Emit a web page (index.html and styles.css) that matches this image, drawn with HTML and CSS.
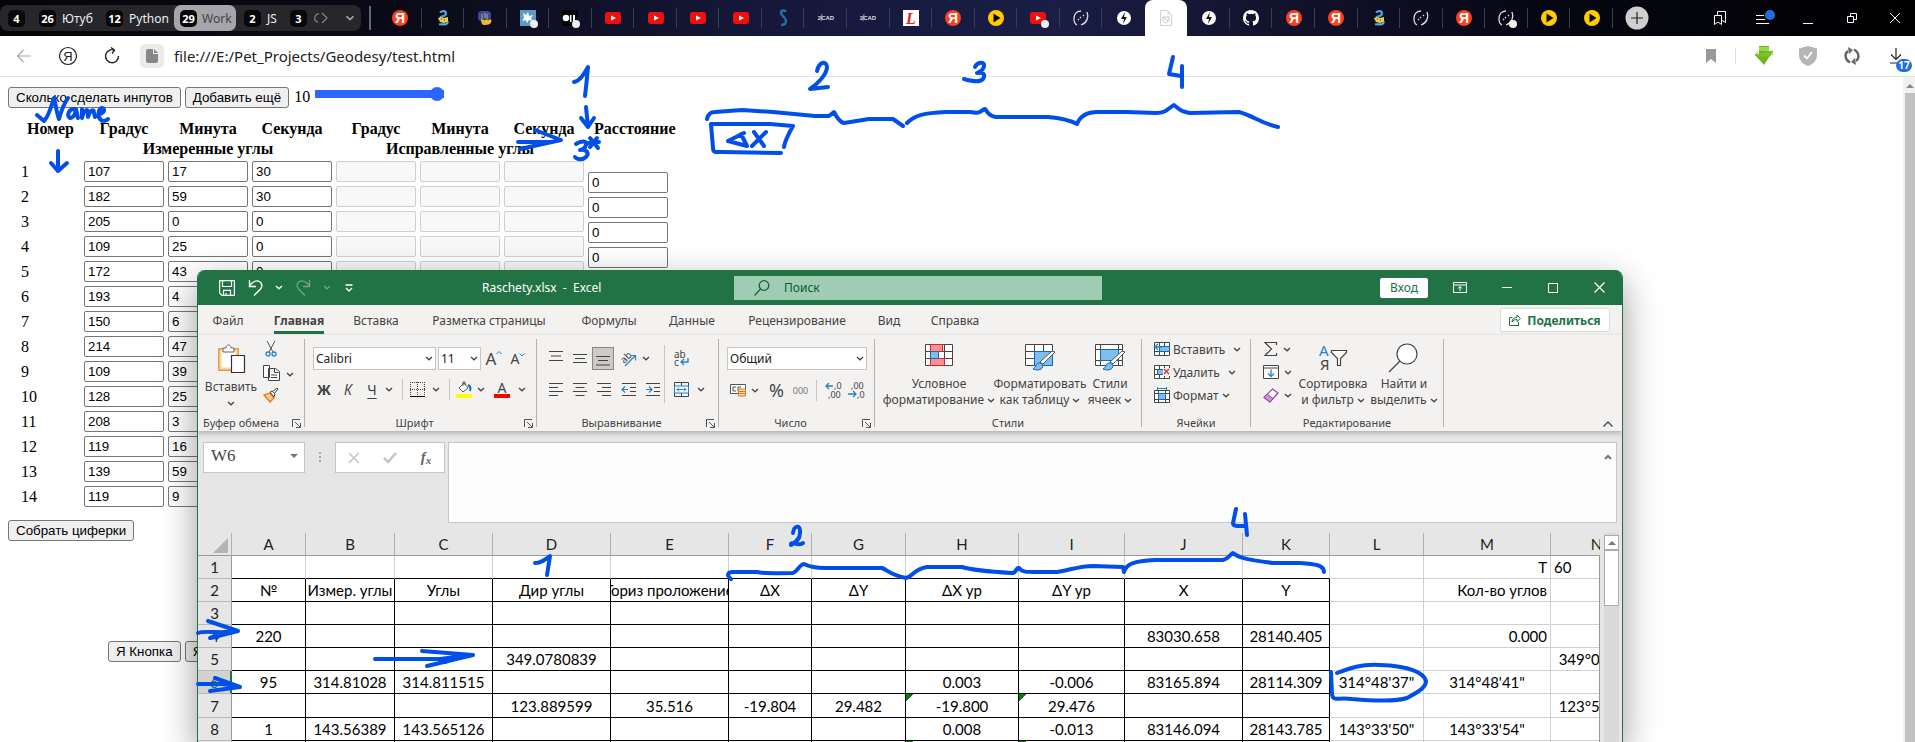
FILE: index.html
```html
<!DOCTYPE html>
<html lang="ru">
<head>
<meta charset="utf-8">
<title>test.html</title>
<link rel="stylesheet" href="styles.css">
</head>
<body>
<svg class="sprite" aria-hidden="true">
  <symbol id="ya" viewBox="0 0 20 20"><circle cx="10" cy="10" r="8" fill="#fc3f1d"/><text x="10" y="15" text-anchor="middle" class="ya-letter">Я</text></symbol>
  <symbol id="snake" viewBox="0 0 20 20"><path d="M7 4.500c2-2 6-2 6 1s-3 2-6 4" fill="none" stroke="#4ba3d8" stroke-width="2.200"/><path d="M6 16.500c3-1 6 1 8-1s-1-3-3-2" fill="none" stroke="#5bb0df" stroke-width="2.200"/><path d="M5 10l3-1 3 1 4-1v4l-4 2-4-1z" fill="#f2cf4a"/><path d="M8 11h1M11 12h1" stroke="#222" stroke-width="1"/></symbol>
  <symbol id="python" viewBox="0 0 20 20"><path d="M3 10V6c0-2 2-3 4-3h5c2 0 4 1 4 3v3c0 1-1 2-2 2H8c-2 0-2 1-2 2-2 0-3-1-3-3z" fill="#3d4a9a"/><path d="M6 11c1 1 10 1 10 0 1 3 0 6-6 6-3 0-4-2-4-6z" fill="#f0b92d"/><path d="M7 6v5M10 5v5M12 6v6M9 12v3" stroke="#b9a988" stroke-width="1"/></symbol>
  <symbol id="react" viewBox="0 0 20 20"><path d="M2 2h16v16H2z" fill="#5b9dc4"/><path d="M5 5l3 2 2-3 1 4 4-1-2 3 2 3-4-1-2 3-1-3-4 1 2-3z" fill="#fff"/><circle cx="16" cy="16" r="4" fill="#eee"/></symbol>
  <symbol id="blob" viewBox="0 0 20 20"><path d="M2 2h16v16H2z" fill="#000"/><circle cx="6" cy="10" r="3.300" fill="#fff"/><path d="M10 7h1.500v7H10zM13 7h2v8h-2z" fill="#fff"/><circle cx="16" cy="16" r="4" fill="#eee"/></symbol>
  <symbol id="yt" viewBox="0 0 20 20"><rect x="2" y="4" width="16" height="12" rx="3" fill="#f00f0f"/><path d="M8 7.500l5 2.500-5 2.500z" fill="#fff"/></symbol>
  <symbol id="ess" viewBox="0 0 20 20"><path d="M13 4c-1-2-5-2-5 1s5 4 5 8-3 4-5 4" fill="none" stroke="#1c6f9c" stroke-width="2.600"/></symbol>
  <symbol id="cad" viewBox="0 0 20 20"><path d="M6 6L5 13" stroke="#bbb" stroke-width=".8"/><text x="10" y="12" text-anchor="middle" class="cad-letter">2CAD</text></symbol>
  <symbol id="ell" viewBox="0 0 20 20"><path d="M2 2h16v16H2z" fill="#fff"/><text x="10" y="16" text-anchor="middle" class="ell-letter">L</text></symbol>
  <symbol id="play" viewBox="0 0 20 20"><circle cx="10" cy="10" r="8" fill="#fc0"/><path d="M7.500 5.500l7 4.500-7 4.500z" fill="#000"/></symbol>
  <symbol id="dial" viewBox="0 0 20 20"><path d="M10 3C5 3 3 7 3 11c0 3 1 5 3 6M16 4c2 5 0 11-6 13" fill="none" stroke="#ddd" stroke-width="1.300"/><path d="M9 9l1 1M12 7l1 1M7 12l1-1" stroke="#ddd" stroke-width="1.300"/></symbol>
  <symbol id="bolt" viewBox="0 0 20 20"><circle cx="10" cy="10" r="7" fill="#fff"/><path d="M11 4L7 11h3l-1 5 4-7h-3z" fill="#111"/></symbol>
  <symbol id="doc" viewBox="0 0 20 20"><path d="M4.500 2.500h7l4 4v11h-11z" fill="#fff" stroke="#d0d0d0"/><path d="M11.500 2.500v4h4z" fill="#ddd"/><path d="M7 9h6c1 3-1 5-3 6-2-1-4-3-3-6zM8 10l4 3" fill="none" stroke="#c4c4c4"/></symbol>
  <symbol id="hub" viewBox="0 0 16 16"><path fill="#fff" d="M8 0C3.580 0 0 3.580 0 8c0 3.540 2.290 6.530 5.470 7.590.4.070.55-.17.55-.38v-1.490c-2.010.37-2.530-.49-2.690-.94-.09-.23-.48-.94-.82-1.130-.28-.15-.68-.52-.01-.53.63-.01 1.080.58 1.230.82.72 1.210 1.870.87 2.330.66.070-.52.28-.87.51-1.070-1.780-.2-3.640-.89-3.640-3.950 0-.87.31-1.590.82-2.150-.08-.2-.36-1.020.08-2.120 0 0 .67-.21 2.200.82a7.600 7.600 0 0 1 4 0c1.530-1.040 2.200-.82 2.200-.82.44 1.100.16 1.920.08 2.120.51.56.82 1.270.82 2.150 0 3.070-1.870 3.750-3.650 3.950.29.25.54.73.54 1.480v2.200c0 .21.15.46.55.38A8 8 0 0 0 16 8c0-4.420-3.580-8-8-8z"/></symbol>
  <symbol id="chev" viewBox="0 0 8 5"><path d="M1 1l3 2.800L7 1" fill="none" stroke="currentColor" stroke-width="1.300"/></symbol>
  <symbol id="launch" viewBox="0 0 9 9"><path d="M.5 8V.5H8M3 3l5 5M8.500 4v4.500H4" fill="none" stroke="#555"/></symbol>
</svg>

<header class="browser">
  <nav class="tabstrip" aria-label="Вкладки">
    <div class="groups">
      <button class="grp g1"><b>4</b></button><button class="grp g2"><b>26</b>Ютуб</button><button class="grp g3"><b>12</b>Python</button><button class="grp g4 on"><b>29</b>Work</button><button class="grp g5"><b>2</b>JS</button><button class="grp g6"><b>3</b><svg width="16" height="12" viewBox="0 0 16 12" fill="none" stroke="#888" stroke-width="1.200"><path d="M6 2C1 1 0 10 5 10M9 1l5 5-5 5"/></svg></button><button class="grp g7" aria-label="Ещё"><svg width="10" height="6"><use href="#chev"/></svg></button>
    </div>
    <div class="tabs">
      <button class="tab"><svg><use href="#ya"/></svg></button><button class="tab"><svg><use href="#snake"/></svg></button><button class="tab"><svg><use href="#python"/></svg></button><button class="tab"><svg><use href="#react"/></svg></button><button class="tab"><svg><use href="#blob"/></svg></button><button class="tab"><svg><use href="#yt"/></svg></button><button class="tab"><svg><use href="#yt"/></svg></button><button class="tab"><svg><use href="#yt"/></svg></button><button class="tab"><svg><use href="#yt"/></svg></button><button class="tab"><svg><use href="#ess"/></svg></button><button class="tab"><svg><use href="#cad"/></svg></button><button class="tab"><svg><use href="#cad"/></svg></button><button class="tab"><svg><use href="#ell"/></svg></button><button class="tab"><svg><use href="#ya"/></svg></button><button class="tab"><svg><use href="#play"/></svg></button><button class="tab dot"><svg><use href="#yt"/></svg></button><button class="tab"><svg><use href="#dial"/></svg></button><button class="tab last"><svg><use href="#bolt"/></svg></button><button class="tab current"><svg><use href="#doc"/></svg></button><button class="tab"><svg><use href="#bolt"/></svg></button><button class="tab"><svg class="hub"><use href="#hub"/></svg></button><button class="tab"><svg><use href="#ya"/></svg></button><button class="tab"><svg><use href="#ya"/></svg></button><button class="tab"><svg><use href="#snake"/></svg></button><button class="tab"><svg><use href="#dial"/></svg></button><button class="tab"><svg><use href="#ya"/></svg></button><button class="tab dot"><svg><use href="#dial"/></svg></button><button class="tab"><svg><use href="#play"/></svg></button><button class="tab"><svg><use href="#play"/></svg></button>
    </div>
    <div class="winctl">
      <button class="plus" aria-label="Новая вкладка"><svg width="24" height="24" viewBox="0 0 24 24"><circle cx="12" cy="12" r="11.500" fill="#cfcfd2"/><path d="M12 6v12M6 12h12" stroke="#222" stroke-width="1.200"/></svg></button>
      <button class="marks" aria-label="Закладки"><svg width="16" height="16" viewBox="0 0 16 16" fill="none" stroke="#fff"><path d="M2.500 5.500h7v9L6 12l-3.500 2.500zM5.500 5V1.500h8v11L10 10.500"/></svg></button>
      <button aria-label="Меню"><svg width="20" height="20" viewBox="0 0 20 20"><path d="M2 7.500h8M2 11.500h9M2 15.500h13" stroke="#fff"/><circle cx="16" cy="7" r="5" fill="#1f6fe0"/></svg></button>
      <button aria-label="Свернуть"><svg width="10" height="12"><path d="M0 11.500h10" stroke="#fff"/></svg></button>
      <button aria-label="Восстановить"><svg width="12" height="12" viewBox="0 0 12 12" fill="none" stroke="#fff"><path d="M1.500 4.500h6v6h-6zM4.500 4.500v-3h6v6h-3"/></svg></button>
      <button aria-label="Закрыть"><svg width="12" height="12" viewBox="0 0 12 12" stroke="#fff"><path d="M1 1l10 10M11 1L1 11"/></svg></button>
    </div>
  </nav>
  <div class="address">
    <button class="a1" aria-label="Назад"><svg width="16" height="14" viewBox="0 0 16 14" fill="none" stroke="#aaa" stroke-width="1.200"><path d="M15 7H1.500M7.500 1L1.500 7l6 6"/></svg></button>
    <button class="a2" aria-label="Яндекс"><svg width="20" height="20" viewBox="0 0 20 20"><circle cx="10" cy="10" r="8.500" fill="none" stroke="#222" stroke-width="1.200"/><text x="10" y="15" text-anchor="middle" class="ya-out">Я</text></svg></button>
    <button class="a3" aria-label="Обновить"><svg width="18" height="18" viewBox="0 0 18 18" fill="none" stroke="#222" stroke-width="1.400"><path d="M15.500 9A6.500 6.500 0 1 1 11 3M8 .5l3.500 2.600L9 6.500"/></svg></button>
    <span class="fileicon"><svg width="12" height="14" viewBox="0 0 12 14"><path d="M2 0h5v5h5v7a2 2 0 0 1-2 2H2a2 2 0 0 1-2-2V2a2 2 0 0 1 2-2zM8 0l4 4H8z" fill="#888"/></svg></span>
    <span class="url">file:///E:/Pet_Projects/Geodesy/test.html</span>
    <div class="exts">
      <button aria-label="В закладки"><svg width="10" height="14"><path d="M0 0h10v14l-5-4-5 4z" fill="#999"/></svg></button>
      <button class="ext-line" aria-label="Загрузить"><svg width="20" height="20" viewBox="0 0 20 20"><path d="M5 0h10v5h4l-9 14L1 9h4z" fill="#6fb51f"/><path d="M5 1h10v4H5z" fill="#9ad84b"/><path d="M1 9l3-3M16 6l3 3M19 5l-3 5H4L1 9z" fill="#7cc32a" stroke="#7cc32a"/></svg></button>
      <button aria-label="Защита"><svg width="20" height="20" viewBox="0 0 20 20"><path d="M10 0l9 2.500V9c0 6-4 9-9 11C5 18 1 15 1 9V2.500z" fill="#b5b5b5"/><path d="M6 9.500l3 3L14 6" fill="none" stroke="#fff" stroke-width="1.800"/></svg></button>
      <button aria-label="Синхронизация"><svg width="18" height="20" viewBox="0 0 18 20"><path d="M7 16.500C2 14 1 8 5 5M11 3.500c5 2.500 6 8.500 2 11.500" fill="none" stroke="#666" stroke-width="2.400"/><path d="M5 1l5 3-4 4zM13 19l-5-3 4-4z" fill="#666"/></svg></button>
      <button class="dl" aria-label="Загрузки"><svg width="14" height="16" viewBox="0 0 14 16" fill="none" stroke="#222" stroke-width="1.200"><path d="M7 0v11M2 6.500L7 11.500l5-5M1 15h12"/></svg><b>17</b></button>
    </div>
  </div>
</header>

<div class="viewport">
<main class="page">
  <div class="controls">
    <button class="native">Сколько сделать инпутов</button>
    <button class="native">Добавить ещё</button>
    <label for="count">10</label>
    <input id="count" type="range" min="1" max="10" value="10">
  </div>
  <div class="angles">
    <table class="form">
      <thead>
        <tr><th>Номер</th><th>Градус</th><th>Минута</th><th>Секунда</th><th>Градус</th><th>Минута</th><th>Секунда</th></tr>
        <tr><th></th><th colspan="3">Измеренные углы</th><th colspan="3">Исправленные углы</th></tr>
      </thead>
      <tbody>
        <tr><td>1</td><td><input aria-label="Градус 1" value="107"></td><td><input aria-label="Минута 1" value="17"></td><td><input aria-label="Секунда 1" value="30"></td><td><input aria-label="Градус" disabled></td><td><input aria-label="Минута" disabled></td><td><input aria-label="Секунда" disabled></td></tr>
        <tr><td>2</td><td><input aria-label="Градус 2" value="182"></td><td><input aria-label="Минута 2" value="59"></td><td><input aria-label="Секунда 2" value="30"></td><td><input aria-label="Градус" disabled></td><td><input aria-label="Минута" disabled></td><td><input aria-label="Секунда" disabled></td></tr>
        <tr><td>3</td><td><input aria-label="Градус 3" value="205"></td><td><input aria-label="Минута 3" value="0"></td><td><input aria-label="Секунда 3" value="0"></td><td><input aria-label="Градус" disabled></td><td><input aria-label="Минута" disabled></td><td><input aria-label="Секунда" disabled></td></tr>
        <tr><td>4</td><td><input aria-label="Градус 4" value="109"></td><td><input aria-label="Минута 4" value="25"></td><td><input aria-label="Секунда 4" value="0"></td><td><input aria-label="Градус" disabled></td><td><input aria-label="Минута" disabled></td><td><input aria-label="Секунда" disabled></td></tr>
        <tr><td>5</td><td><input aria-label="Градус 5" value="172"></td><td><input aria-label="Минута 5" value="43"></td><td><input aria-label="Секунда 5" value="0"></td><td><input aria-label="Градус" disabled></td><td><input aria-label="Минута" disabled></td><td><input aria-label="Секунда" disabled></td></tr>
        <tr><td>6</td><td><input aria-label="Градус 6" value="193"></td><td><input aria-label="Минута 6" value="4"></td></tr>
        <tr><td>7</td><td><input aria-label="Градус 7" value="150"></td><td><input aria-label="Минута 7" value="6"></td></tr>
        <tr><td>8</td><td><input aria-label="Градус 8" value="214"></td><td><input aria-label="Минута 8" value="47"></td></tr>
        <tr><td>9</td><td><input aria-label="Градус 9" value="109"></td><td><input aria-label="Минута 9" value="39"></td></tr>
        <tr><td>10</td><td><input aria-label="Градус 10" value="128"></td><td><input aria-label="Минута 10" value="25"></td></tr>
        <tr><td>11</td><td><input aria-label="Градус 11" value="208"></td><td><input aria-label="Минута 11" value="3"></td></tr>
        <tr><td>12</td><td><input aria-label="Градус 12" value="119"></td><td><input aria-label="Минута 12" value="16"></td></tr>
        <tr><td>13</td><td><input aria-label="Градус 13" value="139"></td><td><input aria-label="Минута 13" value="59"></td></tr>
        <tr><td>14</td><td><input aria-label="Градус 14" value="119"></td><td><input aria-label="Минута 14" value="9"></td></tr>
      </tbody>
    </table>
    <div class="distance">
      <b>Расстояние</b>
      <input aria-label="Расстояние 1" value="0"><input aria-label="Расстояние 2" value="0"><input aria-label="Расстояние 3" value="0"><input aria-label="Расстояние 4" value="0">
    </div>
  </div>
  <button class="native collect">Собрать циферки</button>
  <div class="more"><button class="native">Я Кнопка</button><button class="native">Я Кнопка</button></div>
</main>
<div class="pagescroll"><svg width="8" height="4" viewBox="0 0 8 4"><path d="M4 0l4 4H0z" fill="#888"/></svg><span></span></div>
</div>

<section class="excel">
  <div class="titlebar">
    <div class="quick">
      <button aria-label="Сохранить"><svg width="16" height="16" viewBox="0 0 16 16" fill="none" stroke="#fff" stroke-width="1.200"><path d="M.6.6h14.800v14.800H3L.6 13zM3.500.6v5.900h9V.6M4.500 15.400v-5h7v5M7 15v-2"/></svg></button>
      <button aria-label="Отменить"><svg width="16" height="18" viewBox="0 0 16 18" fill="none" stroke="#fff" stroke-width="1.400"><path d="M1.500 1v6.500H8M1.500 7C5 2 9 1 11.500 2.500c3 2 3 5 1 7.500L6 16.500"/></svg></button>
      <button aria-label="Список отмены"><svg width="8" height="5"><use href="#chev"/></svg></button>
      <button class="faded" aria-label="Повторить"><svg width="16" height="18" viewBox="0 0 16 18" fill="none" stroke="#fff" stroke-width="1.400"><path d="M14.500 1v6.500H8M14.500 7C11 2 7 1 4.500 2.500c-3 2-3 5-1 7.500l6.500 6.500"/></svg></button>
      <button class="faded" aria-label="Список повтора"><svg width="8" height="5"><use href="#chev"/></svg></button>
      <button aria-label="Настройка панели"><svg width="8" height="8" viewBox="0 0 8 8" fill="none" stroke="#fff" stroke-width="1.300"><path d="M.5 1h7M1 4l3 3 3-3"/></svg></button>
    </div>
    <div class="wtitle">Raschety.xlsx&nbsp; -&nbsp; Excel</div>
    <label class="search"><svg width="16" height="16" viewBox="0 0 16 16" fill="none" stroke="#1c5e39" stroke-width="1.300"><circle cx="10" cy="5.500" r="4.800"/><path d="M6.500 9L.5 15.500"/></svg><input type="text" placeholder="Поиск" aria-label="Поиск"></label>
    <div class="wctl">
      <button class="login">Вход</button>
      <button aria-label="Лента"><svg width="14" height="11" viewBox="0 0 14 11" fill="none" stroke="#fff"><path d="M.5.5h13v10H.5zM.5 3h13M7 9V4.500M5 6.500l2-2 2 2"/></svg></button>
      <button aria-label="Свернуть"><svg width="10" height="10"><path d="M0 4.500h10" stroke="#fff"/></svg></button>
      <button aria-label="Развернуть"><svg width="10" height="10"><path d="M.5.5h9v9h-9z" fill="none" stroke="#fff"/></svg></button>
      <button aria-label="Закрыть"><svg width="11" height="11" viewBox="0 0 11 11"><path d="M.5.5l10 10M10.500.5l-10 10" stroke="#fff" stroke-width="1.200"/></svg></button>
    </div>
  </div>
  <nav class="rtabs">
    <button>Файл</button><button class="sel"><span>Главная</span></button><button>Вставка</button><button>Разметка страницы</button><button>Формулы</button><button>Данные</button><button>Рецензирование</button><button>Вид</button><button>Справка</button>
    <button class="share"><svg width="12" height="12" viewBox="0 0 12 12" fill="none" stroke="#217346"><path d="M3.500 3.500h-3v8h9V8M3 8c0-3 2-4.500 5-4.500V1l3.500 3.500L8 7.500V5.500C6 5.500 4 6 3 8z"/></svg>Поделиться</button>
  </nav>
  <div class="ribbon">
    <div class="group w-clip">
      <div class="gbody clip">
        <button class="big"><svg width="28" height="32" viewBox="0 0 28 32"><path d="M2 6h19v21H2z" fill="#fff" stroke="#e08020" stroke-width="1.500"/><path d="M3.500 7.500h16v18h-16z" fill="none" stroke="#f8d991" stroke-width="2"/><path d="M6 9V5h3c0-4 5-4 5 0h3v4z" fill="#fff" stroke="#666"/><path d="M14.500 12.500h13v17h-13z" fill="#fff" stroke="#333" stroke-width="1.200"/></svg><span>Вставить</span><svg class="cv"><use href="#chev"/></svg></button>
        <div class="col3">
          <button aria-label="Вырезать"><svg width="12" height="16" viewBox="0 0 12 16" fill="none" stroke="#555"><path d="M2 0l6 11M10 0L4 11"/><circle cx="3" cy="13" r="2" stroke="#2183cf" stroke-width="1.300"/><circle cx="9" cy="13" r="2" stroke="#2183cf" stroke-width="1.300"/></svg></button>
          <button aria-label="Копировать"><svg width="17" height="17" viewBox="0 0 17 17" fill="#fff" stroke="#444"><path d="M.5 1.500h6v12h-6zM5.500 4.500h7l4 3v9h-11zM11.500 4.500v4h4M8 11h6M8 13.500h6"/></svg></button>
          <button aria-label="Формат по образцу"><svg width="16" height="16" viewBox="0 0 16 16"><path d="M1 8l6-2 4 5-4 4z" fill="#f8c98a" stroke="#e07b18" stroke-width="1.300"/><path d="M7 5l2-1 3 3-1 3zM9 5l5-4 1 1-4 5" fill="#fff" stroke="#444"/></svg></button>
        </div>
        <svg class="cv"><use href="#chev"/></svg>
      </div>
      <div class="glabel"><span>Буфер обмена</span><svg><use href="#launch"/></svg></div>
    </div><i class="vsep"></i>
    <div class="group w-font">
      <div class="gbody rows">
        <div class="r f1">
          <label class="combo"><select aria-label="Шрифт"><option>Calibri</option></select><svg class="cv"><use href="#chev"/></svg></label>
          <label class="combo"><select aria-label="Размер"><option>11</option></select><svg class="cv"><use href="#chev"/></svg></label>
          <button class="t16" aria-label="Увеличить шрифт">A<svg width="6" height="4"><path d="M.5 3L3 .5 5.500 3" fill="none" stroke="#2183cf"/></svg></button>
          <button class="t14" aria-label="Уменьшить шрифт">A<svg width="6" height="4"><path d="M.5.5L3 3 5.500.5" fill="none" stroke="#2183cf"/></svg></button>
        </div>
        <div class="r f2">
          <button class="t14 bold">Ж</button><button class="t14 ital">К</button><button class="t14 und">Ч</button><svg class="cv"><use href="#chev"/></svg><i class="sep"></i>
          <button aria-label="Границы"><svg width="16" height="16" viewBox="0 0 16 16"><path d="M0 .5h15M.5 0v14M14.500 0v14M7.500 0v14M0 7.500h15" stroke="#444" stroke-dasharray="1 1"/><path d="M0 14.500h15" stroke="#000"/></svg></button><svg class="cv"><use href="#chev"/></svg><i class="sep"></i>
          <button aria-label="Заливка"><svg width="16" height="17" viewBox="0 0 16 17"><path d="M3 7l5-5 4 5-5 4zM7 5V1h2v3" fill="#fff" stroke="#555"/><path d="M12 4c2 1 3 3 2 6" fill="none" stroke="#2466a8" stroke-width="2"/><path d="M0 13h16v4H0z" fill="#ff0"/></svg></button><svg class="cv"><use href="#chev"/></svg>
          <button class="t14 fcol" aria-label="Цвет текста">A</button><svg class="cv"><use href="#chev"/></svg>
        </div>
      </div>
      <div class="glabel"><span>Шрифт</span><svg><use href="#launch"/></svg></div>
    </div><i class="vsep"></i>
    <div class="group w-align">
      <div class="gbody alignwrap">
        <div class="rows">
          <div class="r al1">
            <button aria-label="По верхнему краю"><svg class="ln" viewBox="0 0 14 15"><path d="M0 .5h14M2 5h10M0 9.500h14"/></svg></button>
            <button aria-label="По середине"><svg class="ln" viewBox="0 0 14 15"><path d="M0 3.500h14M2 7.500h10M0 11.500h14"/></svg></button>
            <button class="pressed" aria-label="По нижнему краю"><svg class="ln" viewBox="0 0 14 15"><path d="M0 5.500h14M2 9.500h10M0 14h14"/></svg></button>
            <button aria-label="Ориентация"><svg width="17" height="17" viewBox="0 0 17 17"><text x="1" y="12" class="ab" transform="rotate(-45 5 9)">ab</text><path d="M5 16L15 6M10.500 5.500H15.500V10.500" fill="none" stroke="#2183cf" stroke-width="1.200"/></svg></button>
            <svg class="cv"><use href="#chev"/></svg>
          </div>
          <div class="r al2">
            <button aria-label="Влево"><svg class="ln" viewBox="0 0 14 15"><path d="M0 1.500h14M0 5.500h9M0 9.500h14M0 13.500h9"/></svg></button>
            <button aria-label="По центру"><svg class="ln" viewBox="0 0 14 15"><path d="M0 1.500h14M2.500 5.500h9M0 9.500h14M2.500 13.500h9"/></svg></button>
            <button aria-label="Вправо"><svg class="ln" viewBox="0 0 14 15"><path d="M0 1.500h14M5 5.500h9M0 9.500h14M5 13.500h9"/></svg></button>
            <button aria-label="Уменьшить отступ"><svg class="ln" viewBox="0 0 14 15"><path d="M0 1.500h14M8 5.500h6M8 9.500h6M0 13.500h14"/><path d="M0 7.500h6M3 4.500l-3 3 3 3" class="bl"/></svg></button>
            <button aria-label="Увеличить отступ"><svg class="ln" viewBox="0 0 14 15"><path d="M0 1.500h14M8 5.500h6M8 9.500h6M0 13.500h14"/><path d="M0 7.500h6M3 4.500l3 3-3 3" class="bl"/></svg></button>
          </div>
        </div>
        <i class="sep tall"></i>
        <div class="rows">
          <div class="r al3"><button aria-label="Перенести текст"><svg width="16" height="18" viewBox="0 0 16 18"><text x="0" y="8" class="ab">ab</text><text x="0" y="16" class="ab">c</text><path d="M14 8v4H7M10 9l-3 3 3 3" fill="none" stroke="#2183cf" stroke-width="1.300"/></svg></button></div>
          <div class="r al3"><button aria-label="Объединить"><svg width="16" height="16" viewBox="0 0 16 16" fill="none"><path d="M.5.5h14v14H.5zM7.500 0v4M7.500 11v4" stroke="#444"/><path d="M.5 4h14v7H.5zM3 7.500h9M5 5.500l-2 2 2 2M10 5.500l2 2-2 2" stroke="#2183cf" fill="#fff"/></svg></button><svg class="cv"><use href="#chev"/></svg></div>
        </div>
      </div>
      <div class="glabel"><span>Выравнивание</span><svg><use href="#launch"/></svg></div>
    </div><i class="vsep"></i>
    <div class="group w-num">
      <div class="gbody rows">
        <div class="r n1"><label class="combo"><select aria-label="Формат числа"><option>Общий</option></select><svg class="cv"><use href="#chev"/></svg></label></div>
        <div class="r n2">
          <button aria-label="Денежный"><svg width="17" height="14" viewBox="0 0 17 14"><path d="M.5 1.500h15v9H.5zM6 4H3v4h3M11 4H8v4" fill="#fff" stroke="#555"/><path d="M8.500 6h7v7h-7zM8.500 8.500h7M8.500 10.500h7" fill="#fbe0c0" stroke="#e07b18"/></svg></button><svg class="cv"><use href="#chev"/></svg>
          <button class="t18">%</button><button class="t10">000</button><i class="sep"></i>
          <button aria-label="Увеличить разрядность"><svg width="17" height="17" viewBox="0 0 17 17"><text x="9" y="7" class="dg">,0</text><text x="3" y="16" class="dg">,00</text><path d="M8 4H1M4 1L1 4l3 3" fill="none" stroke="#2183cf" stroke-width="1.300"/></svg></button>
          <button aria-label="Уменьшить разрядность"><svg width="17" height="17" viewBox="0 0 17 17"><text x="3" y="7" class="dg">,00</text><text x="9" y="16" class="dg">,0</text><path d="M0 12h8M5 9l3 3-3 3" fill="none" stroke="#2183cf" stroke-width="1.300"/></svg></button>
        </div>
      </div>
      <div class="glabel"><span>Число</span><svg><use href="#launch"/></svg></div>
    </div><i class="vsep"></i>
    <div class="group w-styles">
      <div class="gbody st">
        <button class="big"><svg width="28" height="24" viewBox="0 0 28 24"><path d="M.5 1.500h27v21H.5zM0 8.500h28M0 15.500h28M19.500 1v22" fill="#fff" stroke="#444"/><path d="M5.500 1.500h12v7h-12zM5.500 15.500h14v7h-14z" fill="#ff8f8f" stroke="#d8242c"/><path d="M5.500 8.500h8v7h-8z" fill="#7ebdf0" stroke="#1768b0"/></svg><span>Условное<br>форматирование <svg class="cv"><use href="#chev"/></svg></span></button>
        <button class="big"><svg width="30" height="28" viewBox="0 0 30 28"><path d="M.5 1.500h27v21H.5zM0 8.500h28M0 15.500h28M9.500 1v22M18.500 1v22" fill="#fff" stroke="#444"/><path d="M9.500 8.500h18v14h-18z" fill="#7ebdf0" stroke="#1768b0"/><path d="M30 9L18 21l-3-2L27 8z" fill="#fff" stroke="#555"/><path d="M15 20c-4-1-4 5-7 6 5 2 10 1 10-4z" fill="#7ebdf0" stroke="#1768b0"/></svg><span>Форматировать<br>как таблицу <svg class="cv"><use href="#chev"/></svg></span></button>
        <button class="big"><svg width="30" height="28" viewBox="0 0 30 28"><path d="M.5 1.500h27v21H.5zM0 6.500h28M0 17.500h28M5.500 1v22M23.500 1v22" fill="#fff" stroke="#444"/><path d="M5.500 6.500h18v11h-18z" fill="#7ebdf0" stroke="#1768b0"/><path d="M30 9L18 21l-3-2L27 8z" fill="#fff" stroke="#555"/><path d="M15 20c-4-1-4 5-7 6 5 2 10 1 10-4z" fill="#7ebdf0" stroke="#1768b0"/></svg><span>Стили<br>ячеек <svg class="cv"><use href="#chev"/></svg></span></button>
      </div>
      <div class="glabel"><span>Стили</span></div>
    </div><i class="vsep"></i>
    <div class="group w-cells">
      <div class="gbody cells">
        <button><svg width="16" height="14" viewBox="0 0 16 14"><path d="M.5.5h15v13H.5zM5.500 0v14M10.500 0v14M0 9.500h16" fill="#fff" stroke="#444"/><path d="M5.500 4.500h10v5h-10z" fill="#7ebdf0" stroke="#1768b0"/><path d="M8 5H1M4 2L1 5l3 3" fill="none" stroke="#2183cf" stroke-width="1.300"/></svg><span>Вставить</span><svg class="cv far"><use href="#chev"/></svg></button>
        <button><svg width="16" height="14" viewBox="0 0 16 14"><path d="M.5.5h15v13H.5zM5.500 0v14M10.500 0v14M0 4.500h16M0 9.500h16" fill="#fff" stroke="#444"/><path d="M3.500 4.500h6v5h-6z" fill="#7ebdf0" stroke="#1768b0"/><path d="M9 3h7v8H9z" fill="#f3f2f1"/><path d="M10 4l5 5M15 4l-5 5" stroke="#e03030" stroke-width="1.300"/></svg><span>Удалить</span><svg class="cv far"><use href="#chev"/></svg></button>
        <button><svg width="16" height="16" viewBox="0 0 16 16"><path d="M.5 3.500h15v12H.5zM4.500 3v13M11.500 3v13M0 6.500h16M0 12.500h16" fill="#fff" stroke="#444"/><path d="M4.500 6.500h7v6h-7z" fill="#7ebdf0" stroke="#1768b0"/><path d="M3 1.500h10M3.500 0v3M12.500 0v3" stroke="#2183cf"/></svg><span>Формат</span><svg class="cv"><use href="#chev"/></svg></button>
      </div>
      <div class="glabel"><span>Ячейки</span></div>
    </div><i class="vsep"></i>
    <div class="group w-edit">
      <div class="gbody edit">
        <div class="col3 wide">
          <button aria-label="Сумма"><svg width="14" height="15" viewBox="0 0 14 15"><path d="M12.500 3V.5H1L7.500 7 1 13.500h11.500V11" fill="none" stroke="#444" stroke-width="1.200"/></svg><svg class="cv"><use href="#chev"/></svg></button>
          <button aria-label="Заполнить"><svg width="16" height="14" viewBox="0 0 16 14"><path d="M.5.5h15v13H.5zM0 3h16" fill="#fff" stroke="#444"/><path d="M8 4.500v7M5 8.500l3 3 3-3" fill="none" stroke="#2183cf" stroke-width="1.300"/></svg><svg class="cv"><use href="#chev"/></svg></button>
          <button aria-label="Очистить"><svg width="16" height="15" viewBox="0 0 16 15"><path d="M9.500 1l5.500 4-8 9L1 9.500z" fill="#fff" stroke="#9b3fa5" stroke-width="1.200"/><path d="M1 9.500l3-3.500L10 10.500l-3 3.500z" fill="#d28ddb" stroke="#9b3fa5"/></svg><svg class="cv"><use href="#chev"/></svg></button>
        </div>
        <button class="big"><svg width="30" height="30" viewBox="0 0 30 30"><text x="1" y="13" class="sa">А</text><text x="2" y="27" class="sy">Я</text><path d="M13.500 7.500h15v2l-6 6v7h-3v-7l-6-6z" fill="#fff" stroke="#444" stroke-width="1.200"/></svg><span>Сортировка<br>и фильтр <svg class="cv"><use href="#chev"/></svg></span></button>
        <button class="big"><svg width="34" height="30" viewBox="0 0 34 30" stroke="#444" stroke-width="1.200"><circle cx="20" cy="11" r="10" fill="#fff"/><path d="M13 18L2 29"/></svg><span>Найти и<br>выделить <svg class="cv"><use href="#chev"/></svg></span></button>
      </div>
      <div class="glabel"><span>Редактирование</span></div>
    </div><i class="vsep"></i>
    <button class="collapse" aria-label="Свернуть ленту"><svg width="10" height="6"><path d="M.5 5.500L5 1l4.500 4.500" fill="none" stroke="#444" stroke-width="1.300"/></svg></button>
  </div>
  <div class="fbar">
    <label class="namebox"><input type="text" aria-label="Имя" value="W6"><svg width="8" height="4"><path d="M0 0h8l-4 4z" fill="#777"/></svg></label>
    <span class="grip"></span>
    <div class="fx"><button aria-label="Отмена"><svg width="12" height="12"><path d="M1 1l10 10M11 1L1 11" stroke="#c4c4c4" stroke-width="1.500"/></svg></button><button aria-label="Ввод"><svg width="14" height="12"><path d="M1 6l4 4 8-9" fill="none" stroke="#c4c4c4" stroke-width="2.500"/></svg></button><button class="fxb">f<sub>x</sub></button></div>
    <div class="formula"><textarea aria-label="Строка формул"></textarea><svg width="8" height="6"><path d="M1 5l3-3 3 3" fill="none" stroke="#777" stroke-width="2"/></svg></div>
  </div>
  <div class="sheet">
    <div class="gridwrap">
      <table class="grid">
        <colgroup><col class="c0"><col class="cA"><col class="cB"><col class="cC"><col class="cD"><col class="cD"><col class="cF"><col class="cG"><col class="cH"><col class="cI"><col class="cD"><col class="cK"><col class="cG"><col class="cM"><col class="cN"></colgroup>
        <thead><tr><th><svg width="15" height="15"><path d="M15 0v15H0z" fill="#b4b4b4"/></svg></th><th>A</th><th>B</th><th>C</th><th>D</th><th>E</th><th>F</th><th>G</th><th>H</th><th>I</th><th>J</th><th>K</th><th>L</th><th>M</th><th>N</th></tr></thead>
        <tbody>
          <tr class="first"><th>1</th><td></td><td></td><td></td><td></td><td></td><td></td><td></td><td></td><td></td><td></td><td></td><td></td><td class="rt">T</td><td class="lt">60</td></tr>
          <tr><th>2</th><td>№</td><td><div>Измер. углы</div></td><td>Углы</td><td>Дир углы</td><td><div>Гориз проложение</div></td><td>ΔX</td><td>ΔY</td><td>ΔX ур</td><td>ΔY ур</td><td>X</td><td>Y</td><td></td><td class="rt">Кол-во углов</td><td></td></tr>
          <tr><th>3</th><td></td><td></td><td></td><td></td><td></td><td></td><td></td><td></td><td></td><td></td><td></td><td></td><td></td><td></td></tr>
          <tr><th>4</th><td>220</td><td></td><td></td><td></td><td></td><td></td><td></td><td></td><td></td><td>83030.658</td><td>28140.405</td><td></td><td class="rt">0.000</td><td></td></tr>
          <tr><th>5</th><td></td><td></td><td></td><td>349.0780839</td><td></td><td></td><td></td><td></td><td></td><td></td><td></td><td></td><td></td><td>349°04'41"</td></tr>
          <tr class="active"><th>6</th><td>95</td><td>314.81028</td><td>314.811515</td><td></td><td></td><td></td><td></td><td>0.003</td><td>-0.006</td><td>83165.894</td><td>28114.309</td><td>314°48'37"</td><td>314°48'41"</td><td></td></tr>
          <tr class="tall"><th>7</th><td></td><td></td><td></td><td>123.889599</td><td>35.516</td><td>-19.804</td><td>29.482</td><td class="flag">-19.800</td><td class="flag">29.476</td><td></td><td></td><td></td><td></td><td>123°53'23"</td></tr>
          <tr><th>8</th><td>1</td><td>143.56389</td><td>143.565126</td><td></td><td></td><td></td><td></td><td>0.008</td><td>-0.013</td><td>83146.094</td><td>28143.785</td><td>143°33'50"</td><td>143°33'54"</td><td></td></tr>
          <tr><th></th><td></td><td></td><td></td><td></td><td></td><td></td><td></td><td class="flag"></td><td class="flag"></td><td></td><td></td><td></td><td></td><td></td></tr>
        </tbody>
      </table>
    </div>
    <div class="vscroll"><span class="up"><svg width="8" height="4"><path d="M4 0l4 4H0z" fill="#777"/></svg></span><span class="thumb"></span></div>
  </div>
</section>

<svg class="ink" width="1915" height="742" viewBox="0 0 1915 742" aria-hidden="true">
  <path d="M37 115L44 121C49 116 52 104 54 98C56 106 57 114 59 119C61 111 64 104 68 98M75 109C69 108 66 116 70 118C74 118 76 112 76 109L78 118M82 109L82 118C84 110 88 108 88 112L88 117C90 110 94 108 94 113L95 117M99 114C104 113 106 109 102 108C98 109 97 117 101 120C104 122 107 120 108 119"/>
  <path d="M58 151V171M51 163L58 171L67 163"/>
  <path d="M574 82C580 81 584 74 588 67C587 78 586 88 585 96M586 107L588 127M581 118L588 127L594 118"/>
  <path d="M518 142H551M535 130L561 140L520 149"/>
  <path d="M576 144C582 140 588 141 586 145C585 149 581 150 580 150C586 149 590 153 586 157C583 160 577 160 575 157M590 138L598 148M597 138L590 147M589 143L599 142"/>
  <path d="M817 71C819 62 826 60 827 67C827 75 816 85 810 89L828 87"/>
  <path d="M975 67C977 62 985 61 984 66C984 70 979 72 977 73C983 72 986 74 983 79C979 83 971 81 964 79"/>
  <path d="M1173 57L1169 74L1181 76M1182 66V87"/>
  <path d="M707 119C708 114 711 112 715 112L742 110L773 112L815 116H829L834 112C836 116 840 122 844 123L869 119H893L903 126"/>
  <path d="M907 123C915 115 924 113 946 112H970C982 114 979 111 985 109C988 112 988 116 996 117H1048C1060 118 1070 120 1077 124C1080 116 1086 112 1098 112H1126L1156 113C1167 113 1168 108 1174 105C1178 108 1180 112 1190 113L1239 112C1254 116 1260 123 1278 127"/>
  <path d="M711 124H770L793 126C789 133 785 140 784 147M711 124L713 148C713 153 716 152 722 152L781 153M744 133L728 141L747 146L741 134M754 132L764 146M766 132L752 146"/>
  <path d="M535 563C541 563 545 560 550 556L547 575"/>
  <path d="M198 633C205 630 220 634 238 631M208 621L238 631L210 638L224 633"/>
  <path d="M375 659H440M422 651L473 655L427 666M440 659L473 655M445 662L460 657"/>
  <path d="M198 684H230M215 678L240 687L210 691M222 684L236 686"/>
  <path d="M793 533C794 525 801 524 800 533C800 539 796 542 791 545C790 540 799 547 803 543"/>
  <path d="M731 579C726 575 728 572 733 572H757C765 574 775 573 793 573C798 571 800 564 804 564C810 567 816 568 825 568H882C888 570 888 574 906 578C912 577 914 569 927 567H962C975 571 995 572 1013 573C1017 572 1016 567 1019 568C1023 573 1025 572 1057 572C1070 570 1080 566 1093 566L1123 567L1124 572C1126 564 1134 561 1155 560H1223C1229 559 1228 556 1233 553C1237 556 1239 559 1273 563H1300C1315 564 1324 565 1324 572"/>
  <path d="M1236 509L1233 523C1233 527 1240 526 1245 526M1245 514L1247 535"/>
  <path d="M1331 672L1332 694C1333 702 1337 697 1352 699C1375 701 1395 702 1407 698C1420 691 1426 687 1426 681C1424 673 1410 666 1380 665C1360 664 1350 668 1337 673"/>
</svg>
</body>
</html>
```

FILE: styles.css
```css
* { box-sizing: border-box; }
body {
  margin: 0;
  height: 100vh;
  display: flex;
  flex-direction: column;
  overflow: hidden;
  position: relative;
  background: #fff;
  font-family: "Liberation Serif", "Times New Roman", serif;
  font-size: 16px;
}
button { font-family: inherit; }
.sprite { position: absolute; width: 0; height: 0; }
svg { display: block; flex: none; overflow: visible; }

.ya-letter { font: bold 14px "Liberation Sans", sans-serif; fill: #fff; }
.ya-out { font: 13px "Liberation Sans", sans-serif; fill: #222; }
.cad-letter { font: bold 6px "Liberation Sans", sans-serif; fill: #ddd; }
.ell-letter { font: italic bold 16px "Liberation Serif", serif; fill: #d22; }

/* browser chrome */
.browser { font-family: "Noto Sans", sans-serif; flex: none; }
.browser button { border: 0; background: none; padding: 0; display: flex; align-items: center; justify-content: center; }
.tabstrip {
  height: 36px;
  display: flex;
  background: linear-gradient(90deg, #050508 0%, #0b0b18 22%, #15183a 40%, #1a1d45 55%, #11122a 68%, #070714 80%, #000 100%);
}
.groups {
  width: 361px;
  height: 26px;
  margin: 5px 18px 0 0;
  display: grid;
  grid-template-columns: 33px 67px 72px 66px 46px 44px 33px;
  background: #26262b;
  border-radius: 8px;
  position: relative;
}
.groups::after { content: ""; position: absolute; right: -10px; top: 1px; width: 2px; height: 24px; background: #66667a; }
.browser .grp { color: #eee; font-size: 12px; gap: 6px; justify-content: flex-start; padding-left: 6px; height: 26px; white-space: nowrap; }
.grp b { background: #08080a; border-radius: 5px; width: 17px; height: 17px; line-height: 17px; text-align: center; font-size: 11px; color: #fff; flex: none; }
.browser .g1 { padding-left: 8px; }
.browser .on { background: #a5a5aa; border-radius: 7px; color: #444; width: 62px; margin-left: 2px; gap: 5px; }
.browser .g7 { padding-left: 17px; color: #aaa; }
.tabs { flex: 1; display: flex; min-width: 0; }
.browser .tab { flex: 1; min-width: 0; position: relative; }
.tab svg { width: 20px; height: 20px; }
.tab svg.hub { width: 16px; height: 16px; }
.tab::after { content: ""; position: absolute; right: 0; top: 8px; width: 1px; height: 20px; background: #3c3c50; }
.tab.last::after, .tab.current::after { display: none; }
.browser .current { background: #fff; border-radius: 8px 8px 0 0; }
.dot::before { content: ""; position: absolute; left: 24px; top: 20px; width: 8px; height: 8px; border-radius: 50%; background: #eee; z-index: 1; }
.winctl { width: 302px; display: grid; grid-template-columns: 48px 37px 44px 44px 44px 44px 41px; }
.winctl .marks { grid-column: 3; }
.address { height: 41px; display: flex; align-items: center; border-bottom: 1px solid #e2e2e4; background: #fff; }
.browser .a1 { width: 48px; }
.browser .a2 { width: 40px; }
.browser .a3 { width: 48px; }
.fileicon { width: 24px; height: 24px; margin-left: 4px; background: #ececec; border-radius: 5px; display: flex; align-items: center; justify-content: center; }
.url { margin-left: 10px; font-size: 15px; line-height: 20px; color: #222; flex: 1; }
.exts { display: flex; }
.browser .exts button { width: 44px; height: 32px; position: relative; }
.exts button:first-child { margin-right: 9px; }
.exts .ext-line::before { content: ""; position: absolute; left: -7px; top: 8px; width: 1px; height: 16px; background: #ddd; }
.exts .dl { margin-right: -3px; }
.dl b { position: absolute; left: 22px; top: 19px; width: 16px; height: 13px; border-radius: 7px; background: #1f6fe0; color: #fff; font-size: 10px; line-height: 13px; }

/* page */
.viewport { flex: 1; display: flex; min-height: 0; }
.page { flex: 1; padding: 10px 8px 0; min-width: 0; }
.native {
  font-family: "Liberation Sans", Arial, sans-serif;
  height: 21px;
  padding: 1px 7px;
  border: 1px solid #767676;
  border-radius: 3px;
  background: #efefef;
  color: #000;
  white-space: nowrap;
}
.controls { display: flex; gap: 4px; height: 21px; align-items: flex-start; line-height: 19px; }
.controls label { padding-left: 1px; }
.controls input { appearance: none; width: 129px; height: 14px; margin: 0 0 0 1px; background: linear-gradient(#2b66ff, #2b66ff) center / 100% 8px no-repeat; border-radius: 4px; }
.controls input::-webkit-slider-thumb { appearance: none; width: 14px; height: 14px; border-radius: 50%; background: #2b66ff; }
.angles { display: flex; margin-top: 10px; }
.form { margin-left: 10px; border-spacing: 2px; table-layout: fixed; width: 569px; flex: none; }
.form th, .form td { padding: 1px; line-height: 18px; height: 18px; white-space: nowrap; }
.form th { padding: 0; }
.form th:first-child { width: 61px; }
.form td { height: 23px; }
.form input, .distance input {
  display: block;
  width: 80px;
  height: 21px;
  padding: 1px 3px;
  border: 1px solid #767676;
  border-radius: 2px;
  background: #fff;
  font-family: "Liberation Sans", Arial, sans-serif;
  color: #000;
}
.form input:disabled { border-color: #d0d0d0; background: #f8f8f8; }
.distance { padding-top: 2px; margin-left: 1px; display: grid; grid-template-rows: 52px; grid-auto-rows: 25px; }
.distance b { padding-left: 6px; line-height: 18px; }
.collect { display: block; margin-top: 10px; }
.more { margin: 100px 0 0 100px; display: flex; gap: 4px; }
.pagescroll { width: 12px; background: #f1f1f1; display: flex; flex-direction: column; }
.pagescroll svg { margin: 7px 0 5px 3px; }
.pagescroll span { flex: 1; margin-left: 2px; background: #c1c1c1; }

/* spreadsheet window */
.excel {
  position: absolute;
  left: 197px;
  right: 292px;
  top: 270px;
  bottom: 0;
  display: flex;
  flex-direction: column;
  overflow: hidden;
  border: solid #217346;
  border-width: 0 1px;
  border-radius: 8px 8px 0 0;
  background: #e6e6e6;
  box-shadow: 0 12px 36px rgba(0, 0, 0, .4);
  font-family: "Noto Sans", sans-serif;
  font-size: 12px;
  color: #444;
}
.excel button { border: 0; background: none; padding: 0; color: inherit; font-size: inherit; display: flex; align-items: center; justify-content: center; white-space: nowrap; }
.titlebar { flex: none; height: 35px; background: #217346; color: #fff; display: grid; grid-template-columns: 284px 252px minmax(100px, 368px) 1fr; align-items: center; }
.quick { display: grid; grid-template-columns: 20px 40px 8px 38px 8px 36px; padding-left: 18px; height: 35px; }
.quick { grid-template-columns: 21px 38px 8px 40px 8px 20px; column-gap: 0; }
.quick button:last-child { width: 36px; }
.faded { opacity: .35; }
.search { height: 24px; background: #9fcdb4; display: flex; align-items: center; padding-left: 20px; gap: 14px; }
.search input { border: 0; background: none; font: inherit; width: 200px; padding: 0; }
.search input::placeholder { color: #10552f; opacity: 1; }
.wctl { display: grid; grid-template-columns: 48px 64px 30px 62px 30px; justify-content: end; height: 35px; padding-right: 8px; align-items: center; }
.excel .login { background: #fff; color: #217346; height: 20px; border-radius: 2px; }
.rtabs { flex: none; height: 30px; display: grid; grid-template-columns: 44px 98px 56px 170px 70px 96px 114px 70px 62px 1fr; padding-left: 8px; background: #f3f2f1; }
.sel span { font-weight: bold; line-height: 20px; height: 23px; margin-top: 5px; border-bottom: 3px solid #217346; }
.excel .share { justify-self: end; width: 110px; height: 24px; margin: 3px 12px 0 0; background: #fff; border: 1px solid #ddd; border-radius: 2px; color: #217346; font-weight: bold; gap: 6px; }
.ribbon { flex: none; height: 96px; padding-top: 4px; display: flex; background: #f3f2f1; box-shadow: 0 2px 5px rgba(0, 0, 0, .25); position: relative; }
.vsep { width: 1px; height: 88px; background: #b5b3b1; flex: none; }
.group { flex: none; display: flex; flex-direction: column; }
.w-clip { width: 106px; }
.w-font { width: 231px; }
.w-align { width: 181px; }
.w-num { width: 155px; }
.w-styles { width: 266px; }
.w-cells { width: 108px; }
.w-edit { width: 192px; }
.gbody { height: 76px; }
.glabel { display: grid; grid-template-columns: 1fr auto; align-items: center; height: 16px; line-height: 16px; text-align: center; font-size: 11px; }
.glabel svg { width: 9px; height: 9px; margin-right: 3px; }
.w-clip .glabel { text-align: left; padding-left: 5px; }
.cv { width: 8px; height: 5px; align-self: center; color: #444; }
.sep { width: 1px; height: 21px; background: #c8c6c4; }
.sep.tall { height: 58px; margin: 6px 8px 0 0; flex: none; }
.rows { display: flex; flex-direction: column; padding-top: 8px; gap: 8px; }
.r { display: grid; height: 23px; justify-items: center; align-items: center; }
.excel .t10 { font-size: 9px; color: #777; }
.excel .t14 { font-size: 14px; }
.excel .t16 { font-size: 17px; }
.excel .t18 { font-size: 18px; }
.t14 svg, .t16 svg { align-self: flex-start; margin-top: 4px; }
.excel .bold { font-weight: bold; }
.excel .ital { font-style: italic; }
.excel .und { text-decoration: underline; text-underline-offset: 3px; }
.excel .fcol { width: 16px; height: 17px; line-height: 14px; align-items: flex-start; border-bottom: 4px solid #f00; }
.clip { display: grid; grid-template-columns: 66px 14px 24px; justify-items: center; }
.col3 { display: grid; grid-template-rows: 20px 26px 20px; align-content: start; }
.clip .col3 { width: 18px; }
.clip > .cv { align-self: start; margin-top: 33px; }
.excel .big { flex-direction: column; justify-content: flex-start; padding-top: 4px; line-height: 16px; height: 69px; text-align: center; }
.big > svg:first-child { margin-bottom: auto; }
.big .cv { display: inline-block; vertical-align: middle; }
.big > .cv { margin: 6px 0 2px; }
.combo { display: flex; align-items: center; width: 100%; height: 23px; border: 1px solid #c8c6c4; background: #fff; padding-right: 2px; }
.combo select { appearance: none; border: 0; background: none; font: inherit; color: #222; flex: 1; min-width: 0; padding: 0 0 0 2px; }
.f1 { grid-template-columns: 123px 43px 22px 22px; column-gap: 2px; padding-left: 8px; }
.f2 { grid-template-columns: 24px 24px 24px 10px 16px 16px 20px 6px 24px 10px 32px 8px; padding-left: 7px; }
.alignwrap { display: flex; }
.al1 { grid-template-columns: 24px 24px 22px 28px 8px; padding-left: 7px; }
.al2 { grid-template-columns: 24px 24px 24px 26px 22px; padding-left: 7px; }
.al3 { grid-template-columns: 18px 20px; }
.ln { width: 14px; height: 15px; fill: none; stroke: #444; stroke-width: 1.2; }
.ln .bl { stroke: #2183cf; }
.excel .pressed { width: 22px; height: 23px; background: #cdcbc9; border: 1px solid #8a8886; }
.ab { font: 10px "Noto Sans", sans-serif; fill: #444; }
.dg { font: 9px "Noto Sans", sans-serif; fill: #444; }
.sa { font: 15px "Noto Sans", sans-serif; fill: #2183cf; stroke: none; }
.sy { font: 15px "Noto Sans", sans-serif; fill: #444; }
.n1 { padding: 0 7px 0 8px; }
.n2 { grid-template-columns: 22px 12px 31px 17px 14px 20px 26px; padding-left: 8px; }
.st { display: grid; grid-template-columns: 108px 94px 46px; padding-left: 10px; }
.cells { display: grid; grid-template-rows: 20px 26px 20px; padding-left: 12px; }
.excel .cells button { justify-content: flex-start; gap: 3px; }
.cells .far { margin-left: 5px; }
.edit { display: grid; grid-template-columns: 46px 72px 70px; }
.excel .wide button { gap: 5px; padding-left: 6px; }
.excel .collapse { position: absolute; right: 9px; bottom: 4px; }

.fbar { flex: none; display: flex; padding: 11px 5px 0; height: 92px; }
.fbar > * { flex: none; }
.namebox { width: 102px; height: 31px; border: 1px solid #c6c6c6; background: #fff; display: flex; align-items: center; padding: 0 6px 3px 7px; }
.namebox input { flex: 1; min-width: 0; border: 0; padding: 0; background: none; font: 17px "Liberation Serif", serif; color: #444; }
.grip { width: 2px; height: 10px; margin: 10px 14px; background: repeating-linear-gradient(#aaa 0 2px, transparent 2px 4px); }
.fx { width: 110px; height: 31px; border: 1px solid #c6c6c6; background: #fff; display: grid; grid-template-columns: 1fr 1fr 1fr; }
.excel .fxb { font: italic bold 15px "Liberation Serif", serif; color: #666; }
.fxb sub { font-size: 11px; line-height: 0; margin-top: 4px; }
.fbar .formula { flex: 1; margin-left: 3px; height: 81px; border: 1px solid #c6c6c6; background: #fdfdfd; display: flex; padding: 0 4px 0 0; }
.formula textarea { flex: 1; border: 0; resize: none; background: none; }
.formula svg { margin-top: 11px; }

.sheet { flex: 1; display: flex; padding-top: 10px; min-height: 0; }
.gridwrap { flex: 1; min-width: 0; overflow: hidden; position: relative; }
.gridwrap::after { content: ""; position: absolute; right: 0; top: 22px; bottom: 0; width: 1px; background: #999; }
.grid { table-layout: fixed; width: 1445px; border-spacing: 0; font-family: Lato, "Noto Sans", sans-serif; font-size: 15px; line-height: 20px; color: #000; }
.c0 { width: 34px; }
.cA { width: 74px; }
.cB { width: 89px; }
.cC { width: 98px; }
.cD { width: 118px; }
.cF { width: 83px; }
.cG { width: 94px; }
.cH { width: 113px; }
.cI { width: 106px; }
.cK { width: 87px; }
.cM { width: 127px; }
.cN { width: 92px; }
.grid th, .grid td { height: 23px; padding: 0; text-align: center; font-weight: normal; white-space: nowrap; border: solid #d0d0d0; border-width: 0 1px 1px 0; }
.grid th { background: #e6e6e6; color: #222; }
.grid thead th { border-color: #b0b0b0; border-bottom-color: #999; }
.grid thead svg { margin: 2px 0 0 15px; }
.grid tbody th { border-right-color: #999; border-bottom-color: #b8b8b8; }
.grid td { background: #fff; overflow: hidden; }
.grid td div { display: flex; justify-content: center; overflow: hidden; }
.grid td:nth-child(-n+12) { border-color: #000; }
.grid .first td:nth-child(-n+12) { border-right-color: #d0d0d0; }
.grid .tall th, .grid .tall td { height: 24px; }
.grid .active th { background: #d2d2d2; color: #217346; border-right: 2px solid #217346; }
.grid td.rt { text-align: right; padding-right: 3px; }
.grid td.lt { text-align: left; padding-left: 3px; }
.grid .flag { background: linear-gradient(135deg, #0a7a0a 5px, #fff 5px); }
.vscroll {
  width: 22px;
  padding: 2px 3px 0 4px;
  display: flex;
  flex-direction: column;
  background: linear-gradient(90deg, transparent 4px, #dadada 4px 19px, transparent 19px);
}
.vscroll span { background: #fff; border: 1px solid #ababab; width: 15px; }
.up { height: 15px; display: flex; align-items: center; justify-content: center; }
.thumb { height: 56px; }

/* pen strokes over everything */
.ink { position: absolute; left: 0; top: 0; pointer-events: none; fill: none; stroke: #004fe8; stroke-width: 4; stroke-linecap: round; stroke-linejoin: round; }
```
